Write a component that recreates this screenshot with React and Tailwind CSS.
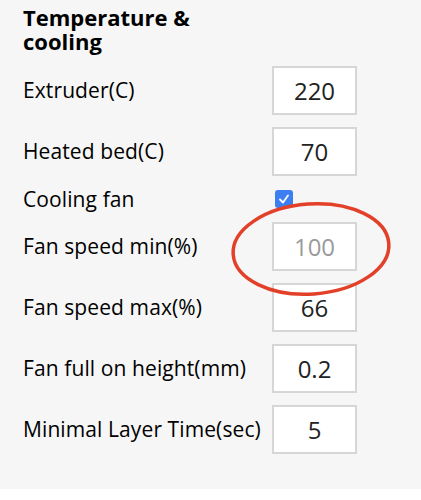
export default function App() {
  const rows = [
    { label: "Extruder(C)", value: "220" },
    { label: "Heated bed(C)", value: "70" },
  ];
  const rows2 = [
    { label: "Fan speed min(%)", value: "100", disabled: true },
    { label: "Fan speed max(%)", value: "66" },
    { label: "Fan full on height(mm)", value: "0.2" },
    { label: "Minimal Layer Time(sec)", value: "5" },
  ];

  const Field = ({ label, value, disabled }) => (
    <div className="flex items-center h-[49px]">
      <div className="w-[249px] text-[21px] text-black tracking-[0.1px] whitespace-nowrap">{label}</div>
      <div
        className={
          "w-[85px] h-[49px] bg-white border-2 border-[#d6d6d6] flex items-center justify-center text-[24px] " +
          (disabled ? "text-[#9a9a9a]" : "text-[#222]")
        }
      >
        {value}
      </div>
    </div>
  );

  return (
    <div className="relative w-[421px] h-[500px] bg-white" style={{ fontFamily: '"Open Sans", "Liberation Sans", sans-serif' }}>
      <div className="bg-[#f6f6f6] pl-[23px] pt-[5px] pb-[35px]">
        {/* Heading */}
        <h2 className="text-[22px] font-bold leading-[24px] text-black mb-[13px]">
          Temperature &amp;
          <br />
          cooling
        </h2>

        <div className="flex flex-col gap-[12px]">
          {rows.map((r) => (
            <Field key={r.label} {...r} />
          ))}
        </div>

        {/* Cooling fan */}
        <div className="flex items-start h-[22px] mt-[12px] mb-[12px]">
          <div className="w-[252px] text-[21px] leading-[22px] text-black tracking-[0.1px]">Cooling fan</div>
          <div className="mt-[2px] w-[18px] h-[18px] overflow-hidden">
            <div className="w-[18px] h-[18px] rounded-[3px] bg-[#3b7ff0] flex items-center justify-center">
              <svg width="12" height="12" viewBox="0 0 12 12" fill="none">
                <path d="M2 6.5 L5 9.5 L10 2.5" stroke="white" strokeWidth="1.8" strokeLinecap="round" strokeLinejoin="round" />
              </svg>
            </div>
          </div>
        </div>

        <div className="flex flex-col gap-[12px]">
          {rows2.map((r) => (
            <Field key={r.label} {...r} />
          ))}
        </div>
      </div>

      {/* Red annotation circle */}
      <svg className="absolute left-0 top-0 pointer-events-none" width="421" height="500">
        <ellipse cx="311" cy="249" rx="78" ry="45" fill="none" stroke="#e3402a" strokeWidth="3.5" transform="rotate(-4 311 249)" />
      </svg>
    </div>
  );
}
